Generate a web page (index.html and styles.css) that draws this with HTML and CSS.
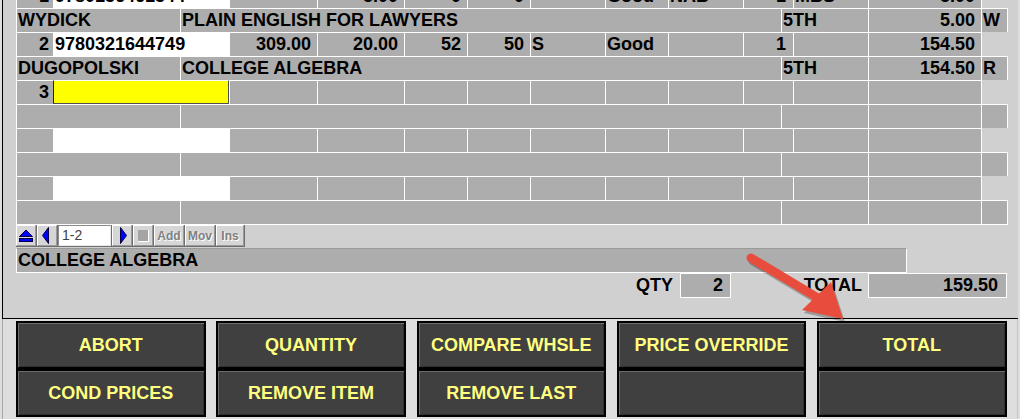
FILE: index.html
```html
<!DOCTYPE html>
<html>
<head>
<meta charset="utf-8">
<link rel="stylesheet" href="styles.css">
</head>
<body>
<div class="window">
  <div class="viewport">
    <div class="grid">
      <div class="row">
        <div class="c n0 r">1</div><div class="c n1 white">9780136461344</div><div class="c n2 r"></div><div class="c n3 r">5.00</div><div class="c n4 r">0</div><div class="c n5 r">0</div><div class="c n6"></div><div class="c n7">Good</div><div class="c n8">NAB</div><div class="c n9 r">1</div><div class="c n10">MBS</div><div class="c n11 r">5.00</div>
      </div>
      <div class="row">
        <div class="c a0">WYDICK</div><div class="c a1">PLAIN ENGLISH FOR LAWYERS</div><div class="c a2">5TH</div><div class="c a3 r">5.00</div><div class="c a4">W</div>
      </div>
      <div class="row">
        <div class="c n0 r">2</div><div class="c n1 white">9780321644749</div><div class="c n2 r">309.00</div><div class="c n3 r">20.00</div><div class="c n4 r">52</div><div class="c n5 r">50</div><div class="c n6">S</div><div class="c n7">Good</div><div class="c n8"></div><div class="c n9 r">1</div><div class="c n10"></div><div class="c n11 r">154.50</div>
      </div>
      <div class="row">
        <div class="c a0">DUGOPOLSKI</div><div class="c a1">COLLEGE ALGEBRA</div><div class="c a2">5TH</div><div class="c a3 r">154.50</div><div class="c a4">R</div>
      </div>
      <div class="row">
        <div class="c n0 r">3</div><div class="c n1 active"></div><div class="c n2"></div><div class="c n3"></div><div class="c n4"></div><div class="c n5"></div><div class="c n6"></div><div class="c n7"></div><div class="c n8"></div><div class="c n9"></div><div class="c n10"></div><div class="c n11"></div>
      </div>
      <div class="row">
        <div class="c a0"></div><div class="c a1"></div><div class="c a2"></div><div class="c a3"></div><div class="c a4"></div>
      </div>
      <div class="row">
        <div class="c n0"></div><div class="c n1 white"></div><div class="c n2"></div><div class="c n3"></div><div class="c n4"></div><div class="c n5"></div><div class="c n6"></div><div class="c n7"></div><div class="c n8"></div><div class="c n9"></div><div class="c n10"></div><div class="c n11"></div>
      </div>
      <div class="row">
        <div class="c a0"></div><div class="c a1"></div><div class="c a2"></div><div class="c a3"></div><div class="c a4"></div>
      </div>
      <div class="row">
        <div class="c n0"></div><div class="c n1 white"></div><div class="c n2"></div><div class="c n3"></div><div class="c n4"></div><div class="c n5"></div><div class="c n6"></div><div class="c n7"></div><div class="c n8"></div><div class="c n9"></div><div class="c n10"></div><div class="c n11"></div>
      </div>
      <div class="row last">
        <div class="c a0"></div><div class="c a1"></div><div class="c a2"></div><div class="c a3"></div><div class="c a4"></div>
      </div>
    </div>
  </div>

  <div class="nav">
    <span class="nb">
      <svg width="18" height="19" viewBox="0 0 18 19"><polygon points="2.5,10.5 9,4 15.5,10.5" fill="#0000ff" stroke="#000040" stroke-width="1"/><rect x="2.5" y="12.5" width="13" height="3" fill="#0000ff" stroke="#000040" stroke-width="1"/></svg>
    </span>
    <span class="nb">
      <svg width="18" height="19" viewBox="0 0 18 19"><polygon points="10.5,1.5 4.5,9.5 10.5,17.5" fill="#0000ff" stroke="#000040" stroke-width="1"/></svg>
    </span>
    <span class="nav-input">1-2</span>
    <span class="nb">
      <svg width="18" height="19" viewBox="0 0 18 19"><polygon points="7.5,1.5 13.5,9.5 7.5,17.5" fill="#0000ff" stroke="#000040" stroke-width="1"/></svg>
    </span>
    <span class="nb"><span class="stop"></span></span>
    <span class="nb txt w30">Add</span>
    <span class="nb txt w30">Mov</span>
    <span class="nb txt w28">Ins</span>
  </div>

  <div class="desc">COLLEGE ALGEBRA</div>

  <div class="totals">
    <div class="tlabel qty">QTY</div>
    <div class="tcell qtycell">2</div>
    <div class="tlabel total">TOTAL</div>
    <div class="tcell totalcell">159.50</div>
  </div>
</div>

<div class="btnarea">
  <div class="btngrid">
    <div class="btn">ABORT</div>
    <div class="btn">QUANTITY</div>
    <div class="btn">COMPARE WHSLE</div>
    <div class="btn">PRICE OVERRIDE</div>
    <div class="btn">TOTAL</div>
    <div class="btn">COND PRICES</div>
    <div class="btn">REMOVE ITEM</div>
    <div class="btn">REMOVE LAST</div>
    <div class="btn"></div>
    <div class="btn"></div>
  </div>
</div>

<svg class="arrow" width="1020" height="419" viewBox="0 0 1020 419">
  <g opacity="0.25" transform="translate(2,3)">
    <line x1="751" y1="258" x2="818" y2="298" stroke="#000" stroke-width="9" stroke-linecap="round"/>
    <polygon points="843,319 802,310 831,282" fill="#000"/>
  </g>
  <line x1="751" y1="258" x2="818" y2="298" stroke="#e84c3d" stroke-width="9" stroke-linecap="round"/>
  <polygon points="843,319 802,310 831,282" fill="#e84c3d"/>
</svg>
</body>
</html>
```

FILE: styles.css
```css
* { box-sizing: border-box; }
html, body { margin: 0; padding: 0; }
body {
  width: 1020px;
  height: 419px;
  overflow: hidden;
  position: relative;
  background: #dedede;
  font-family: "Liberation Sans", Arial, sans-serif;
  font-weight: bold;
  font-size: 18px;
  color: #000;
}

.window {
  margin-left: 2px;
  width: 1016px;
  height: 319px;
  border-left: 1px solid #000;
  border-bottom: 1px solid #000;
  background: #d0d0d0;
  padding-left: 13px;
  display: flex;
  flex-direction: column;
}

.viewport {
  height: 225px;
  overflow: hidden;
  flex: none;
}
.grid { margin-top: -16px; }

.row { display: flex; height: 24px; }
.row.last { height: 25px; }
.row.last .c { border-bottom: 1px solid #fff; }

.c {
  height: 100%;
  background: #adadad;
  border-top: 1px solid #fff;
  border-left: 1px solid #fff;
  line-height: 23px;
  padding: 0 0 0 1px;
  white-space: nowrap;
  overflow: hidden;
  flex: none;
}
.c.r { text-align: right; padding: 0 6px 0 0; }

.n0 { width: 37px; }
.n0.r { padding-right: 4px; }
.n1 { width: 176px; }
.n2 { width: 88px; }
.n3 { width: 87px; }
.n4 { width: 63px; }
.n5 { width: 63px; }
.n6 { width: 75px; }
.n7 { width: 63px; }
.n8 { width: 75px; }
.n9 { width: 50px; }
.n9.r { padding-right: 7px; }
.n10 { width: 75px; }
.n11 { width: 114px; border-right: 1px solid #fff; }

.a0 { width: 164px; }
.a1 { width: 601px; }
.a2 { width: 87px; }
.a3 { width: 113px; }
.a4 { width: 27px; border-right: 1px solid #fff; }

.c.white { background: #fff; }
.c.active {
  background: #ffff00;
  border-left: 1px solid #1c1c70;
  border-right: 1px solid #505050;
  border-bottom: 1px solid #505050;
}

/* navigator */
.nav {
  display: flex;
  gap: 1px;
  height: 22px;
  width: 229px;
  background: #6e6e6e;
  padding: 0 1px 1px 0;
  flex: none;
}
.nb {
  width: 20px;
  height: 21px;
  background: #d6d6d6;
  border-top: 1px solid #fff;
  border-left: 1px solid #fff;
  border-right: 1px solid #9a9a9a;
  border-bottom: 1px solid #9a9a9a;
  display: flex;
  align-items: center;
  justify-content: center;
}
.nb svg { display: block; }
.nb.txt {
  font-size: 12px;
  color: #808080;
  text-shadow: 1px 1px 0 #fff;
}
.w30 { width: 30px; }
.w28 { width: 28px; }
.stop {
  width: 11px;
  height: 12px;
  background: #a4a4a4;
  border-right: 1px solid #fff;
  border-bottom: 1px solid #fff;
}
.nav-input {
  width: 53px;
  height: 21px;
  background: #fff;
  border-top: 1px solid #8a8a8a;
  border-left: 1px solid #8a8a8a;
  border-right: 1px solid #e8e8e8;
  border-bottom: 1px solid #e8e8e8;
  font-weight: normal;
  font-size: 14px;
  color: #404040;
  line-height: 18px;
  padding-left: 3px;
}

.desc {
  width: 891px;
  height: 25px;
  margin-top: 1px;
  background: #adadad;
  border-top: 1px solid #9a9a9a;
  border-left: 1px solid #fff;
  border-right: 1px solid #fff;
  border-bottom: 1px solid #fff;
  line-height: 23px;
  padding-left: 1px;
  flex: none;
}

.totals {
  display: flex;
  height: 25px;
  flex: none;
}
.tlabel { line-height: 25px; text-align: right; }
.qty { width: 664px; padding-right: 7px; }
.total { width: 137px; padding-right: 6px; }
.tcell {
  background: #adadad;
  border: 1px solid #fff;
  text-align: right;
  line-height: 23px;
}
.qtycell { width: 51px; padding-right: 7px; }
.totalcell { width: 139px; padding-right: 8px; }

/* bottom buttons */
.btnarea {
  margin-left: 2px;
  width: 1016px;
  height: 100px;
  border-left: 1px solid #a8a8a8;
  border-right: 1px solid #c4c4c4;
  padding: 2px 0 0 13px;
}
.btngrid {
  display: grid;
  grid-template-columns: repeat(5, 189.5px);
  grid-auto-rows: 48px;
  column-gap: 10.75px;
}
.btn {
  background: #404040;
  border: 2px solid #000;
  box-shadow: inset 1px 1px 0 #6c6c6c, inset -1px -1px 0 #303030;
  color: #ffff80;
  display: flex;
  align-items: center;
  justify-content: center;
  white-space: nowrap;
}

.arrow {
  position: absolute;
  left: 0;
  top: 0;
  pointer-events: none;
}
```
